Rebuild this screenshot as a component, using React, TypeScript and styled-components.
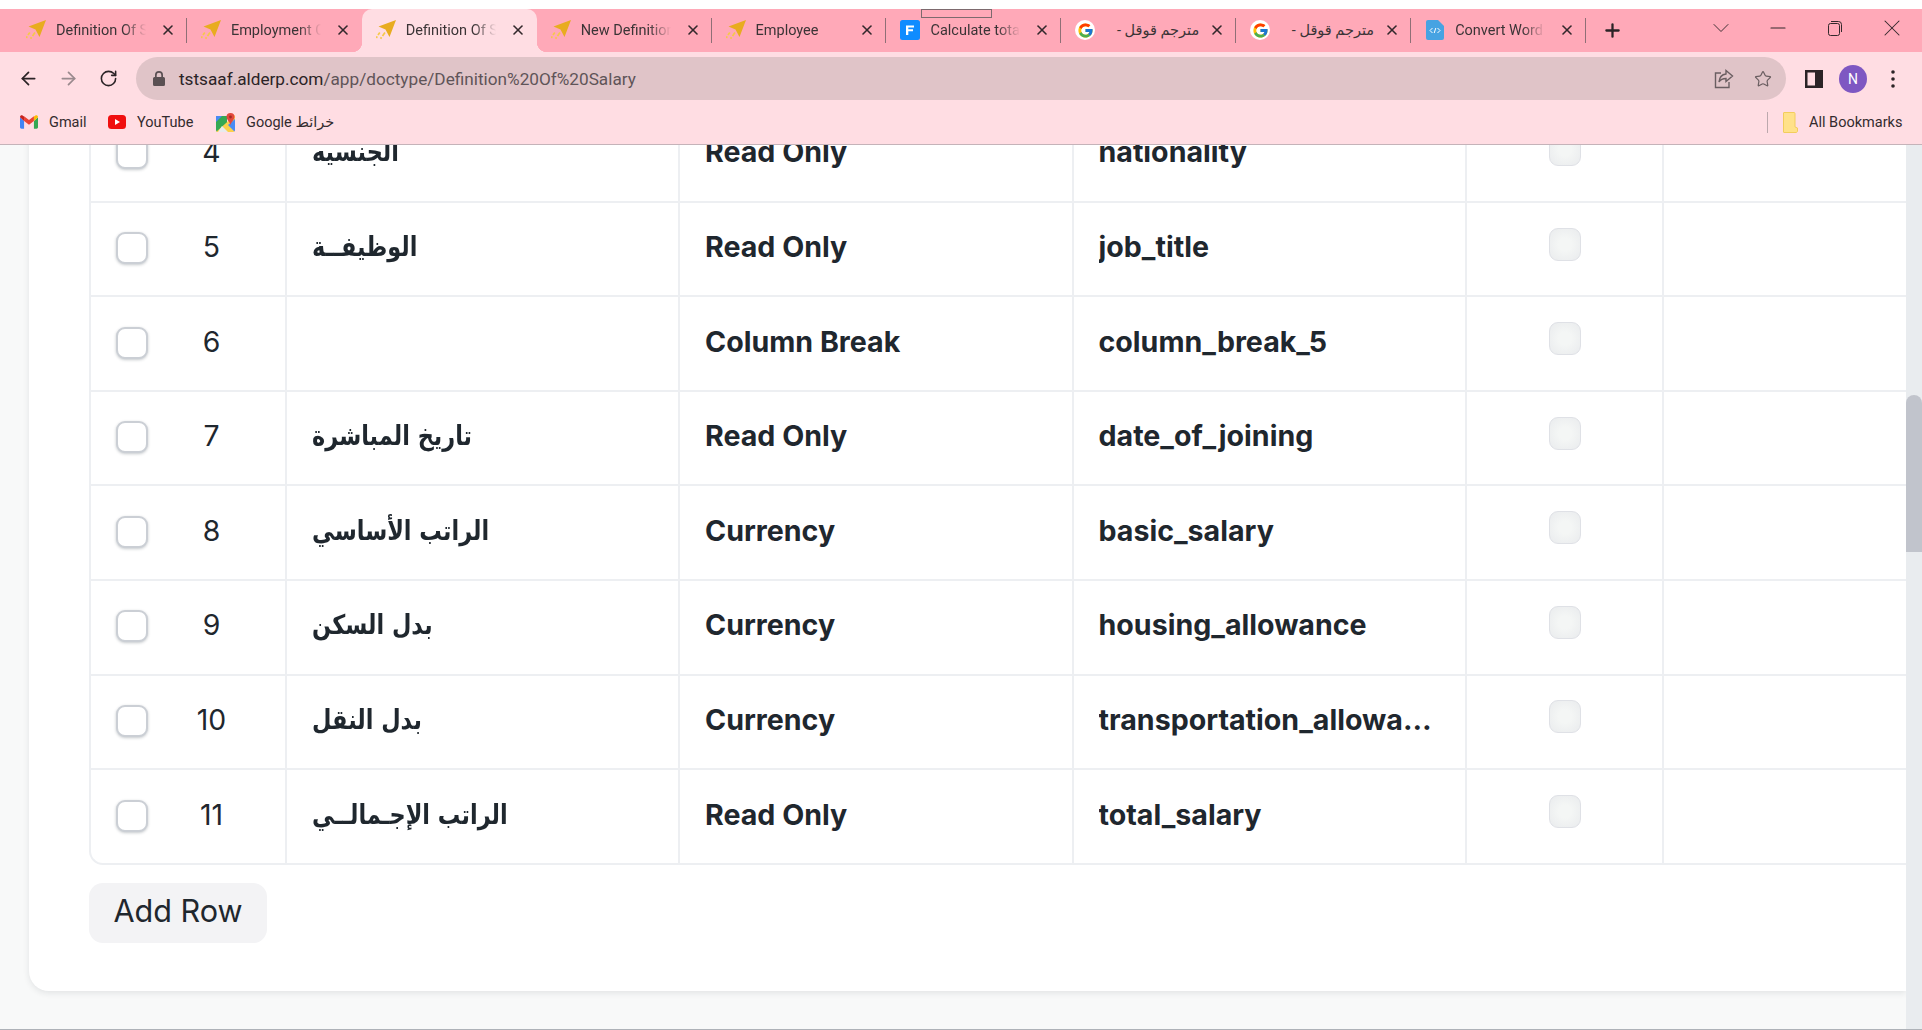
import React from 'react';
import styled, { createGlobalStyle } from 'styled-components';
import { ArrowLeft, ArrowRight, ChevronDown, Minus, Plus, RotateCw, Star, X } from 'lucide-react';
import { FcGoogle } from 'react-icons/fc';

const GlobalStyle = createGlobalStyle`
    html, body {
        margin: 0;
        height: 100%;
        overflow: hidden;
        background: #ffffff;
    }
    #root {
        height: 100%;
    }
`;

const Page = styled.div`
    height: 1030px;
    display: flex;
    flex-direction: column;
    padding-top: 9px;
    box-sizing: border-box;
    position: relative;
    overflow: hidden;
    font-family: Roboto, 'DejaVu Sans', sans-serif;
`;

const DragHandle = styled.div`
    position: absolute;
    top: 9px;
    left: 921px;
    width: 71px;
    height: 9px;
    box-sizing: border-box;
    border: 1px solid #7d6a6e;
`;

const TabStrip = styled.div`
    height: 43px;
    flex: none;
    background: #ffa9b8;
    display: flex;
    padding-left: 12px;
`;

const Tab = styled.div<{ $active?: boolean; $separator?: boolean }>`
    position: relative;
    flex: 0 0 174.9px;
    min-width: 0;
    box-sizing: border-box;
    display: flex;
    align-items: center;
    padding: 0 11px 1px 14px;
    gap: 10px;
    border-radius: 10px 10px 0 0;
    background: ${(p) => (p.$active ? '#ffdde3' : 'transparent')};

    &::after {
        content: '';
        display: ${(p) => (p.$separator ? 'block' : 'none')};
        position: absolute;
        right: 0;
        top: 9px;
        height: 25px;
        width: 1px;
        background: #8f6f76;
    }
`;

const Flare = styled.span<{ $side: 'left' | 'right' }>`
    position: absolute;
    bottom: 0;
    ${(p) => p.$side}: -10px;
    width: 10px;
    height: 10px;
    background: radial-gradient(
        circle at ${(p) => (p.$side === 'left' ? '0 0' : '100% 0')},
        transparent 10px,
        #ffdde3 10.5px
    );
`;

const TabTitle = styled.span<{ $rtl?: boolean }>`
    flex: 1;
    min-width: 0;
    overflow: hidden;
    white-space: nowrap;
    font-size: 14.5px;
    color: #3b3436;
    direction: ${(p) => (p.$rtl ? 'rtl' : 'ltr')};
    -webkit-mask-image: ${(p) =>
        p.$rtl ? 'none' : 'linear-gradient(to right, #000 72%, transparent 96%)'};
    mask-image: ${(p) =>
        p.$rtl ? 'none' : 'linear-gradient(to right, #000 72%, transparent 96%)'};
`;

const TabClose = styled.span`
    display: flex;
    flex: none;
    color: #33282b;
`;

const FavSlot = styled.span`
    display: flex;
    flex: none;
    width: 20px;
    height: 20px;
    align-items: center;
    justify-content: center;
`;

const GoogleBadge = styled.span`
    width: 20px;
    height: 20px;
    border-radius: 50%;
    background: #ffffff;
    display: flex;
    align-items: center;
    justify-content: center;
`;

const NewTab = styled.span`
    display: flex;
    margin-left: 16px;
    align-self: center;
    color: #2b2326;
`;

const WindowControls = styled.div`
    margin-left: auto;
    display: flex;
    align-items: center;
    height: 38px;
    padding-right: 2px;
    color: #33282b;
`;

const WindowButton = styled.span<{ $width: number }>`
    width: ${(p) => p.$width}px;
    display: flex;
    justify-content: center;
`;

const Toolbar = styled.div`
    height: 48px;
    flex: none;
    box-sizing: border-box;
    padding: 5px 0 0 8px;
    background: #ffdde3;
    display: flex;
    align-items: flex-start;
`;

const NavButton = styled.span<{ $muted?: boolean }>`
    width: 40px;
    height: 43px;
    flex: none;
    display: flex;
    align-items: center;
    justify-content: center;
    color: ${(p) => (p.$muted ? '#9a8a8e' : '#2b2326')};
`;

const Omnibox = styled.div`
    flex: none;
    width: 1650px;
    height: 43px;
    margin-left: 8px;
    box-sizing: border-box;
    padding: 0 14px 0 17px;
    border-radius: 22px;
    background: #e0c4c8;
    display: flex;
    align-items: center;
`;

const UrlText = styled.span`
    margin-left: 14px;
    font-size: 17.2px;
    color: #5f5458;
    white-space: nowrap;
`;

const UrlHost = styled.span`
    color: #2a2326;
`;

const OmniActions = styled.div`
    margin-left: auto;
    display: flex;
    align-items: center;
    gap: 20px;
    color: #6a5e61;
`;

const ProfileGroup = styled.div`
    flex: none;
    display: flex;
    align-items: center;
    height: 43px;
    margin-left: 19px;
    color: #2b2326;
`;

const Avatar = styled.span`
    width: 28px;
    height: 28px;
    margin-left: 16px;
    border-radius: 50%;
    background: #7e57c2;
    color: #ffffff;
    font-size: 14px;
    display: flex;
    align-items: center;
    justify-content: center;
`;

const Kebab = styled.span`
    margin-left: 24px;
    display: flex;
`;

const BookmarkBar = styled.div`
    height: 45px;
    flex: none;
    box-sizing: border-box;
    background: #ffdde3;
    border-bottom: 1px solid #c5b3b9;
    padding: 0 19px 0 20px;
    display: flex;
    align-items: center;
    font-size: 14.5px;
    color: #332b2e;
`;

const Bookmark = styled.span<{ $width: number }>`
    width: ${(p) => p.$width}px;
    flex: none;
    display: flex;
    align-items: center;
    gap: 11px;
    white-space: nowrap;
`;

const BookmarkRight = styled.div`
    margin-left: auto;
    display: flex;
    align-items: center;
`;

const BookmarkDivider = styled.span`
    width: 1px;
    height: 21px;
    background: #bca8ad;
    margin-right: 15px;
`;

const Viewport = styled.div`
    flex: 1;
    min-height: 0;
    display: flex;
    background: #f8f9f9;
    border-bottom: 1px solid #aeb2b8;
`;

const Scroller = styled.div`
    flex: 1;
    min-width: 0;
    overflow: hidden;
`;

const Card = styled.div`
    margin: -36.8px 0 0 29px;
    height: 882.8px;
    box-sizing: border-box;
    padding-left: 61px;
    background: #ffffff;
    border-bottom-left-radius: 20px;
    box-shadow: 0 2px 6px rgba(25, 39, 52, 0.1);
    font-family: Inter, 'DejaVu Sans', sans-serif;
    color: #1f272e;
`;

const GridTable = styled.div`
    border-left: 2px solid #edeff2;
    border-bottom: 2px solid #edeff2;
    border-bottom-left-radius: 14px;
    margin-left: -1px;
`;

const Row = styled.div`
    height: 94.57px;
    box-sizing: border-box;
    display: grid;
    grid-template-columns: 196px 393px 393.5px 393.5px 197px 1fr;
    border-bottom: 2px solid #edeff2;

    &:last-child {
        height: 92.8px;
        border-bottom: none;
    }
`;

const Cell = styled.div`
    border-right: 2px solid #edeff2;
    padding: 0 24px 5px 25px;
    display: flex;
    align-items: center;
    min-width: 0;
    font-size: 28.6px;
    font-weight: 700;
    white-space: nowrap;
    overflow: hidden;

    &:last-child {
        border-right: none;
    }
`;

const EllipsisText = styled.span`
    min-width: 0;
    overflow: hidden;
    text-overflow: ellipsis;
`;

const ArabicText = styled.span`
    display: inline-block;
    font-family: 'DejaVu Sans', sans-serif;
    font-size: 27px;
    font-weight: 700;
    direction: rtl;
    transform: scaleX(0.83);
    transform-origin: left center;
`;

const SelectCell = styled.div`
    border-right: 2px solid #edeff2;
    display: flex;
    align-items: center;
    padding-left: 25px;
`;

const RowCheck = styled.span`
    width: 32px;
    height: 32px;
    margin-bottom: 2px;
    box-sizing: border-box;
    flex: none;
    border: 2px solid #cbcfd5;
    border-radius: 9px;
    background: #ffffff;
    box-shadow: 0 1px 3px rgba(25, 39, 52, 0.25);
`;

const RowIndex = styled.span`
    width: 127px;
    text-align: center;
    font-size: 28.4px;
    font-weight: 400;
    padding-bottom: 5px;
`;

const ToggleCell = styled.div`
    border-right: 2px solid #edeff2;
    display: flex;
    align-items: center;
    justify-content: center;
    padding-bottom: 10px;
`;

const DisabledCheck = styled.span`
    width: 32px;
    height: 33px;
    box-sizing: border-box;
    border: 1.5px solid #dfe1e6;
    border-radius: 9px;
    background: radial-gradient(circle, #f4f6f5 30%, #e9ebed 100%);
`;

const AddRow = styled.button`
    display: block;
    margin: 18px 0 0 -1px;
    width: 178px;
    height: 60px;
    border: none;
    border-radius: 14px;
    background: #f3f3f5;
    color: #1f272e;
    font-family: Inter, sans-serif;
    font-size: 30.6px;
    font-weight: 400;
    padding: 0 0 4px;
`;

const ScrollTrack = styled.div`
    flex: none;
    width: 16px;
    background: #e9ecef;
`;

const ScrollThumb = styled.div`
    margin-top: 250px;
    height: 157px;
    background: #c1c4cc;
    border-radius: 8px 8px 0 0;
`;

const PlaneIcon = () => (
    <svg width="20" height="20" viewBox="0 0 20 20">
        <polygon points="20,0 2.500,6.500 9.500,9.500 13.500,17" fill="#e8ac20" />
        <path d="M3.800 12.500 2 15M1.200 16.300 0.300 18M9 12.500 6.500 16M5.500 17.300 4.600 18.800" stroke="#f5c84a" strokeWidth="1.700" fill="none" />
    </svg>
);

const FrappeIcon = () => (
    <svg width="20" height="20" viewBox="0 0 20 20">
        <rect width="20" height="20" rx="2.500" fill="#0f8cff" />
        <path d="M6 5.500h8v2H8.300v1.800H13v2H8.300V15H6z" fill="#ffffff" />
    </svg>
);

const CodeDocIcon = () => (
    <svg width="20" height="20" viewBox="0 0 20 20">
        <path d="M3 0h10l6 6v12a2 2 0 0 1-2 2H3a2 2 0 0 1-2-2V2a2 2 0 0 1 2-2z" fill="#47a3e2" />
        <path d="M7.500 8 5 10.500 7.500 13M12.500 8l2.500 2.500-2.500 2.500M10.800 8 9.200 13" stroke="#ffffff" strokeWidth="1" fill="none" />
    </svg>
);

const GmailIcon = () => (
    <svg width="18" height="14" viewBox="0 0 19 14">
        <path d="M0 2v10.500C0 13.300.7 14 1.500 14H4.300V6z" fill="#4285f4" />
        <path d="M14.700 6v8h2.800c.8 0 1.500-.7 1.500-1.500V2z" fill="#34a853" />
        <path d="M4.300 6V1L9.500 5l5.200-4v5L9.500 9.800z" fill="#ea4335" />
        <path d="M0 2c0-2 2-2.500 3-1.500L4.300 1.300V6z" fill="#c5221f" />
        <path d="M14.700 1.300 16 .5c1-1 3-.5 3 1.500l-4.300 4z" fill="#fbbc04" />
    </svg>
);

const YoutubeIcon = () => (
    <svg width="18" height="14" viewBox="0 0 18 14">
        <rect width="18" height="14" rx="3.500" fill="#f00f0f" />
        <polygon points="7,4 12,7 7,10" fill="#ffffff" />
    </svg>
);

const MapsIcon = () => (
    <svg width="19" height="19" viewBox="0 0 19 19">
        <path d="M0 3h11v16H2a2 2 0 0 1-2-2z" fill="#35a853" />
        <path d="M0 3h6L0 9z" fill="#4a8af4" />
        <path d="M0 19 19 2v15a2 2 0 0 1-2 2z" fill="#fbd04b" />
        <path d="M6 13l6 6H2z" fill="#e8eaed" />
        <path d="M12 12l7-6v11a2 2 0 0 1-.6 1.400z" fill="#4a8af4" />
        <path d="M14.500 0A4 4 0 0 1 18.500 4c0 3-4 5-4 9 0-4-4-6-4-9a4 4 0 0 1 4-4z" fill="#e2483d" />
        <circle cx="14.500" cy="4" r="1.400" fill="#9e2b25" />
    </svg>
);

const ShareIcon = () => (
    <svg width="20" height="20" viewBox="0 0 20 20" fill="none" stroke="currentColor" strokeWidth="1.400">
        <path d="M12 1.500 18.500 7 12 12.500V9.500c-3.500 0-5.500 1-7 3.500.4-4.500 3-7.500 7-8z" />
        <path d="M7 4H1.500v14.500H15V13" />
    </svg>
);

const SidePanelIcon = () => (
    <svg width="18" height="18" viewBox="0 0 18 18">
        <path d="M0 0h18v18H0z M2.500 2.500v13H10v-13z" fill="currentColor" fillRule="evenodd" />
    </svg>
);

const KebabIcon = () => (
    <svg width="4" height="18" viewBox="0 0 4 18" fill="currentColor">
        <circle cx="2" cy="2" r="1.800" />
        <circle cx="2" cy="9" r="1.800" />
        <circle cx="2" cy="16" r="1.800" />
    </svg>
);

const LockIcon = () => (
    <svg width="12" height="15" viewBox="0 0 12 15" fill="#5a5053">
        <path d="M2 6V4a4 4 0 0 1 8 0v2h.5A1.500 1.500 0 0 1 12 7.500v6a1.500 1.500 0 0 1-1.500 1.500h-9A1.500 1.500 0 0 1 0 13.500v-6A1.500 1.500 0 0 1 1.500 6zm1.700 0h4.600V4a2.300 2.300 0 0 0-4.600 0z" />
    </svg>
);

const RestoreIcon = () => (
    <svg width="14" height="15" viewBox="0 0 14 15" fill="none" stroke="currentColor" strokeWidth="1">
        <rect x="0.500" y="2.500" width="11" height="12" rx="2" />
        <path d="M3 .5h7.500a3 3 0 0 1 3 3V11" />
    </svg>
);

const FolderIcon = () => (
    <svg width="15" height="21" viewBox="0 0 15 21">
        <path d="M1 .5h10c.6 0 1 .4 1 1V15l2.500 1v3c0 .8-.6 1.500-1.500 1.500H1A.5.5 0 0 1 .5 20V1A.5.5 0 0 1 1 .5z" fill="#ffe189" stroke="#f2cd5c" />
    </svg>
);

type TabInfo = { title: string; icon: 'plane' | 'frappe' | 'google' | 'code'; rtl?: boolean };

const tabs: TabInfo[] = [
    { title: 'Definition Of Salary', icon: 'plane' },
    { title: 'Employment Contract', icon: 'plane' },
    { title: 'Definition Of Salary', icon: 'plane' },
    { title: 'New Definition Of Salary', icon: 'plane' },
    { title: 'Employee', icon: 'plane' },
    { title: 'Calculate total salary', icon: 'frappe' },
    { title: 'مترجم قوقل - ', icon: 'google', rtl: true },
    { title: 'مترجم قوقل - ', icon: 'google', rtl: true },
    { title: 'Convert Word to HTML', icon: 'code' },
];

const ACTIVE_TAB = 2;

const TabFavicon = ({ icon }: { icon: TabInfo['icon'] }) => {
    if (icon === 'frappe') return <FrappeIcon />;
    if (icon === 'code') return <CodeDocIcon />;
    if (icon === 'google') {
        return (
            <GoogleBadge>
                <FcGoogle size={17} />
            </GoogleBadge>
        );
    }
    return <PlaneIcon />;
};

type RowInfo = { index: number; label: string; type: string; name: string };

const rows: RowInfo[] = [
    { index: 4, label: 'الجنسيه', type: 'Read Only', name: 'nationality' },
    { index: 5, label: 'الوظيفــة', type: 'Read Only', name: 'job_title' },
    { index: 6, label: '', type: 'Column Break', name: 'column_break_5' },
    { index: 7, label: 'تاريخ المباشرة', type: 'Read Only', name: 'date_of_joining' },
    { index: 8, label: 'الراتب الأساسي', type: 'Currency', name: 'basic_salary' },
    { index: 9, label: 'بدل السكن', type: 'Currency', name: 'housing_allowance' },
    { index: 10, label: 'بدل النقل', type: 'Currency', name: 'transportation_allowance' },
    { index: 11, label: 'الراتب الإجـمالــي', type: 'Read Only', name: 'total_salary' },
];

const App = () => {
    return (
        <Page>
            <GlobalStyle />
            <DragHandle />
            <TabStrip>
                {tabs.map((tab, i) => (
                    <Tab
                        key={i}
                        $active={i === ACTIVE_TAB}
                        $separator={i !== ACTIVE_TAB && i !== ACTIVE_TAB - 1}
                    >
                        {i === ACTIVE_TAB && <Flare $side="left" />}
                        {i === ACTIVE_TAB && <Flare $side="right" />}
                        <FavSlot>
                            <TabFavicon icon={tab.icon} />
                        </FavSlot>
                        <TabTitle $rtl={tab.rtl}>{tab.title}</TabTitle>
                        <TabClose>
                            <X size={16} strokeWidth={2.4} />
                        </TabClose>
                    </Tab>
                ))}
                <NewTab>
                    <Plus size={21} strokeWidth={2.6} />
                </NewTab>
                <WindowControls>
                    <WindowButton $width={56}>
                        <ChevronDown size={28} strokeWidth={0.8} />
                    </WindowButton>
                    <WindowButton $width={57}>
                        <Minus size={24} strokeWidth={1.1} />
                    </WindowButton>
                    <WindowButton $width={57}>
                        <RestoreIcon />
                    </WindowButton>
                    <WindowButton $width={57}>
                        <X size={28} strokeWidth={0.9} />
                    </WindowButton>
                </WindowControls>
            </TabStrip>
            <Toolbar>
                <NavButton>
                    <ArrowLeft size={21} strokeWidth={2} />
                </NavButton>
                <NavButton $muted>
                    <ArrowRight size={21} strokeWidth={2} />
                </NavButton>
                <NavButton>
                    <RotateCw size={19} strokeWidth={2} />
                </NavButton>
                <Omnibox>
                    <LockIcon />
                    <UrlText>
                        <UrlHost>tstsaaf.alderp.com</UrlHost>/app/doctype/Definition%20Of%20Salary
                    </UrlText>
                    <OmniActions>
                        <ShareIcon />
                        <Star size={18} strokeWidth={1.6} />
                    </OmniActions>
                </Omnibox>
                <ProfileGroup>
                    <SidePanelIcon />
                    <Avatar>N</Avatar>
                    <Kebab>
                        <KebabIcon />
                    </Kebab>
                </ProfileGroup>
            </Toolbar>
            <BookmarkBar>
                <Bookmark $width={88}>
                    <GmailIcon />
                    Gmail
                </Bookmark>
                <Bookmark $width={108}>
                    <YoutubeIcon />
                    YouTube
                </Bookmark>
                <Bookmark $width={130}>
                    <MapsIcon />
                    Google خرائط
                </Bookmark>
                <BookmarkRight>
                    <BookmarkDivider />
                    <Bookmark $width={120}>
                        <FolderIcon />
                        All Bookmarks
                    </Bookmark>
                </BookmarkRight>
            </BookmarkBar>
            <Viewport>
                <Scroller>
                    <Card>
                        <GridTable>
                            {rows.map((row) => (
                                <Row key={row.index}>
                                    <SelectCell>
                                        <RowCheck />
                                        <RowIndex>{row.index}</RowIndex>
                                    </SelectCell>
                                    <Cell>
                                        <ArabicText>{row.label}</ArabicText>
                                    </Cell>
                                    <Cell>{row.type}</Cell>
                                    <Cell>
                                        <EllipsisText>{row.name}</EllipsisText>
                                    </Cell>
                                    <ToggleCell>
                                        <DisabledCheck />
                                    </ToggleCell>
                                    <Cell />
                                </Row>
                            ))}
                        </GridTable>
                        <AddRow>Add Row</AddRow>
                    </Card>
                </Scroller>
                <ScrollTrack>
                    <ScrollThumb />
                </ScrollTrack>
            </Viewport>
        </Page>
    );
};

export default App;
